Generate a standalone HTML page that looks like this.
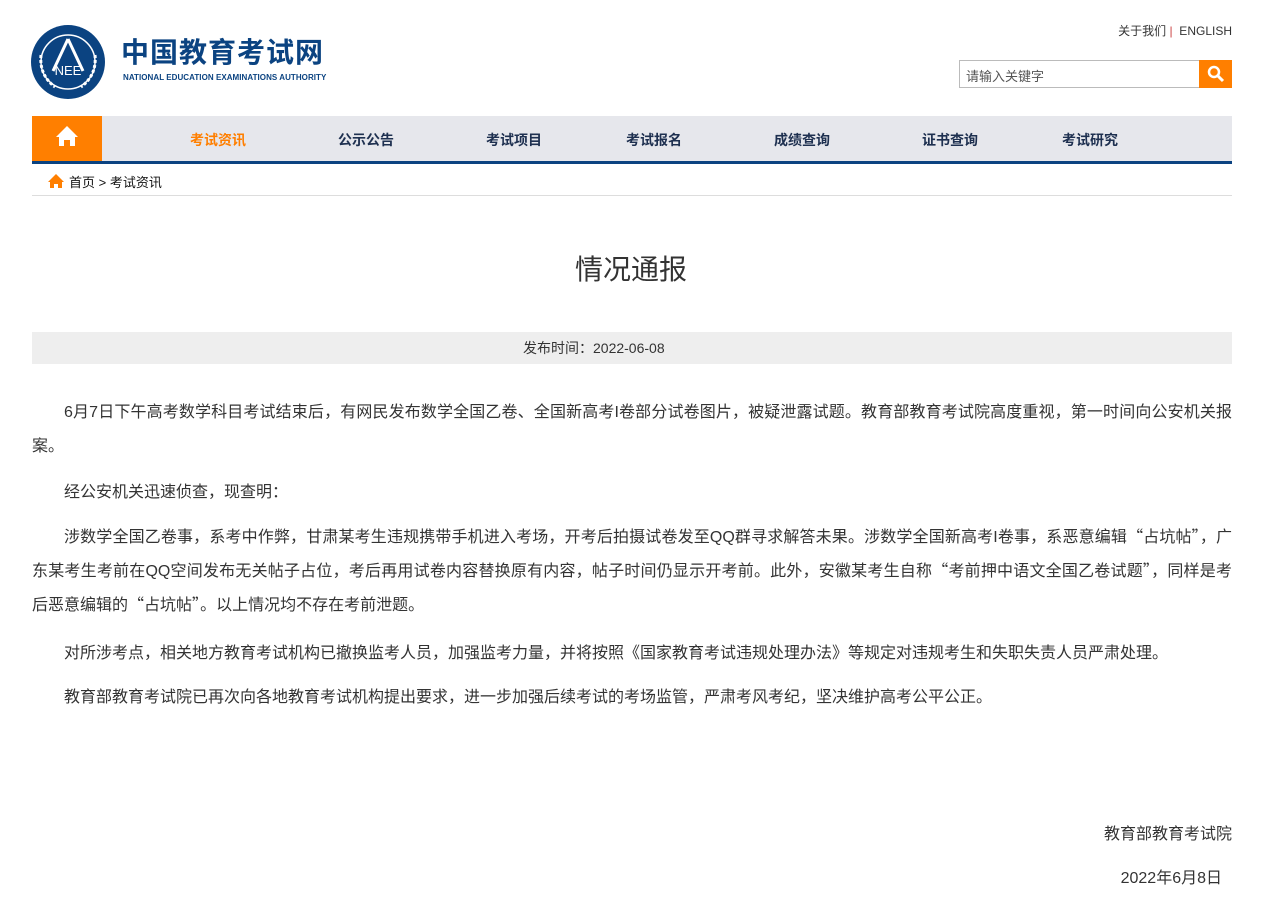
<!DOCTYPE html>
<html><head><meta charset="utf-8"><style>
*{margin:0;padding:0;box-sizing:border-box}
body{width:1262px;height:910px;background:#fff;font-family:"Liberation Sans","Noto Sans CJK SC",sans-serif;color:#333;position:relative;overflow:hidden}
.abs{position:absolute}
.nav{left:32px;top:116px;width:1200px;background:#e6e7ec;border-bottom:3px solid #0b4381;height:48px}
.nav a{position:absolute;top:14px;font-size:14px;font-weight:bold;color:#1e3050;text-decoration:none}
.p{left:32px;width:1200px;font-size:16px;line-height:34px;text-indent:32px;text-align:justify}
q{quotes:none;font-family:"Noto Sans CJK SC",sans-serif;line-height:1}
</style></head><body>
<svg class="abs" style="left:31px;top:25px" width="74" height="74" viewBox="0 0 74 74">
<circle cx="37" cy="37" r="37" fill="#0b4381"/>
<circle cx="37" cy="37" r="27" fill="none" stroke="#fff" stroke-width="1.5"/>
<path d="M37 14 L22 46 M37 14 L52 46" stroke="#fff" stroke-width="3" fill="none"/>
<text x="37" y="50" fill="#fff" font-size="13" font-family="Liberation Sans" text-anchor="middle">NEE</text>
<path d="M10 30 Q8 50 24 62 M64 30 Q66 50 50 62" stroke="#fff" stroke-width="3" fill="none" stroke-dasharray="3 2"/>
</svg>
<div class="abs" style="left:121px;top:37px;font-size:28px;font-weight:bold;color:#0b4381;letter-spacing:1px;line-height:32px">中国教育考试网</div>
<div class="abs" style="left:123px;top:73px;font-size:8px;font-weight:bold;color:#0b4381;white-space:nowrap;letter-spacing:0.05px">NATIONAL EDUCATION EXAMINATIONS AUTHORITY</div>
<div class="abs" style="right:30px;top:22px;font-size:12px;color:#333">关于我们 <span style="color:#c44">|</span>&nbsp; ENGLISH</div>
<div class="abs" style="left:959px;top:60px;width:241px;height:28px;border:1px solid #bbb;font-size:13px;color:#555;padding:5px 6px">请输入关键字</div>
<div class="abs" style="left:1199px;top:60px;width:33px;height:28px;background:#ff7f00">
<svg width="33" height="28"><circle cx="15" cy="12" r="5" stroke="#fff" stroke-width="2.5" fill="none"/><path d="M19 16 L24 21" stroke="#fff" stroke-width="3"/></svg></div>
<div class="abs nav">
<div class="abs" style="left:0;top:0;width:70px;height:45px;background:#ff7f00">
<svg width="70" height="45"><path d="M35 10 L24 21 H27 V30 H32 V24 H38 V30 H43 V21 H46 Z" fill="#fff"/></svg></div>
<a style="left:158px;color:#ff7f00">考试资讯</a><a style="left:306px">公示公告</a><a style="left:454px">考试项目</a><a style="left:594px">考试报名</a><a style="left:742px">成绩查询</a><a style="left:890px">证书查询</a><a style="left:1030px">考试研究</a>
</div>
<svg class="abs" style="left:47px;top:173px" width="18" height="16"><path d="M9 1 L1 9 H3 V15 H7 V11 H11 V15 H15 V9 H17 Z" fill="#ff7f00"/></svg>
<div class="abs" style="left:69px;top:172px;font-size:13px;color:#111">首页 &gt; 考试资讯</div>
<div class="abs" style="left:32px;top:195px;width:1200px;height:1px;background:#ddd"></div>
<div class="abs" style="left:0;width:1262px;top:248px;text-align:center;font-size:28px;color:#333">情况通报</div>
<div class="abs" style="left:32px;top:332px;width:1200px;height:32px;background:#eeeeee"></div>
<div class="abs" style="left:523px;top:332px;font-size:14px;line-height:32px;color:#333;white-space:nowrap">发布时间：2022-06-08</div>
<div class="abs p" style="top:396px">6月7日下午高考数学科目考试结束后，有网民发布数学全国乙卷、全国新高考I卷部分试卷图片，被疑泄露试题。教育部教育考试院高度重视，第一时间向公安机关报案。</div>
<div class="abs p" style="top:476px">经公安机关迅速侦查，现查明：</div>
<div class="abs p" style="top:521px">涉数学全国乙卷事，系考中作弊，甘肃某考生违规携带手机进入考场，开考后拍摄试卷发至QQ群寻求解答未果。涉数学全国新高考I卷事，系恶意编辑<q>“</q>占坑帖<q>”</q>，广东某考生考前在QQ空间发布无关帖子占位，考后再用试卷内容替换原有内容，帖子时间仍显示开考前。此外，安徽某考生自称<q>“</q>考前押中语文全国乙卷试题<q>”</q>，同样是考后恶意编辑的<q>“</q>占坑帖<q>”</q>。以上情况均不存在考前泄题。</div>
<div class="abs p" style="top:637px">对所涉考点，相关地方教育考试机构已撤换监考人员，加强监考力量，并将按照《国家教育考试违规处理办法》等规定对违规考生和失职失责人员严肃处理。</div>
<div class="abs p" style="top:681px">教育部教育考试院已再次向各地教育考试机构提出要求，进一步加强后续考试的考场监管，严肃考风考纪，坚决维护高考公平公正。</div>
<div class="abs" style="right:30px;top:820px;font-size:16px">教育部教育考试院</div>
<div class="abs" style="right:40px;top:864px;font-size:16px">2022年6月8日</div>
</body></html>
